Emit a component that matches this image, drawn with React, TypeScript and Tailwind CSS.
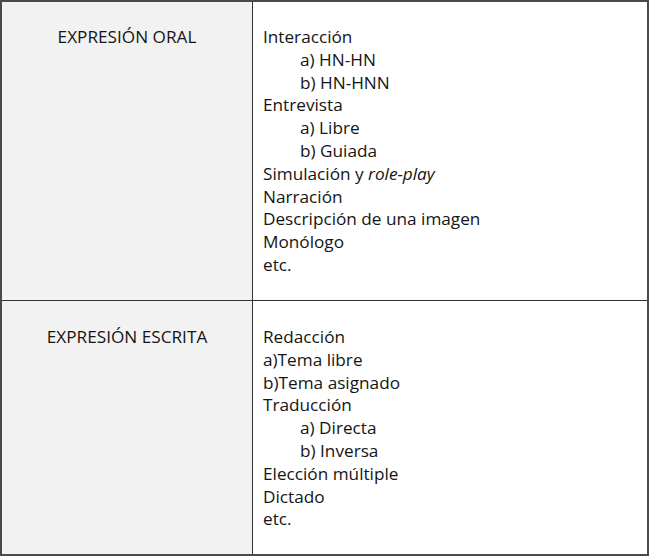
const oral: { text: React.ReactNode; indent?: boolean }[] = [
  { text: 'Interacción' },
  { text: 'a) HN-HN', indent: true },
  { text: 'b) HN-HNN', indent: true },
  { text: 'Entrevista' },
  { text: 'a) Libre', indent: true },
  { text: 'b) Guiada', indent: true },
  { text: <>Simulación y <i>role-play</i></> },
  { text: 'Narración' },
  { text: 'Descripción de una imagen' },
  { text: 'Monólogo' },
  { text: 'etc.' },
]

const escrita: { text: React.ReactNode; indent?: boolean }[] = [
  { text: 'Redacción' },
  { text: 'a)Tema libre' },
  { text: 'b)Tema asignado' },
  { text: 'Traducción' },
  { text: 'a) Directa', indent: true },
  { text: 'b) Inversa', indent: true },
  { text: 'Elección múltiple' },
  { text: 'Dictado' },
  { text: 'etc.' },
]

function Lines({ items }: { items: typeof oral }) {
  return (
    <div className="flex flex-col">
      {items.map((it, i) => (
        <div key={i} className={`h-[22.8px] leading-[22.8px] ${it.indent ? 'pl-[37px]' : ''}`}>
          {it.text}
        </div>
      ))}
    </div>
  )
}

export default function App() {
  return (
    <div
      className="w-[650px] h-[557px] bg-white text-[17.2px] text-[#151515]"
      style={{ fontFamily: '"Open Sans", sans-serif' }}
    >
      <div className="w-[649px] h-[556px] border-2 border-[#4a4a4a] grid grid-cols-[251px_1fr] grid-rows-[299px_1fr]">
        <div className="bg-[#f2f2f2] border-r border-b border-[#333] pt-[24px] text-center leading-[22.8px]">
          EXPRESIÓN ORAL
        </div>
        <div className="border-b border-[#333] pt-[24px] pl-[10px]">
          <Lines items={oral} />
        </div>
        <div className="bg-[#f2f2f2] border-r border-[#333] pt-[25px] text-center leading-[22.8px]">
          EXPRESIÓN ESCRITA
        </div>
        <div className="pt-[25px] pl-[10px]">
          <Lines items={escrita} />
        </div>
      </div>
    </div>
  )
}
